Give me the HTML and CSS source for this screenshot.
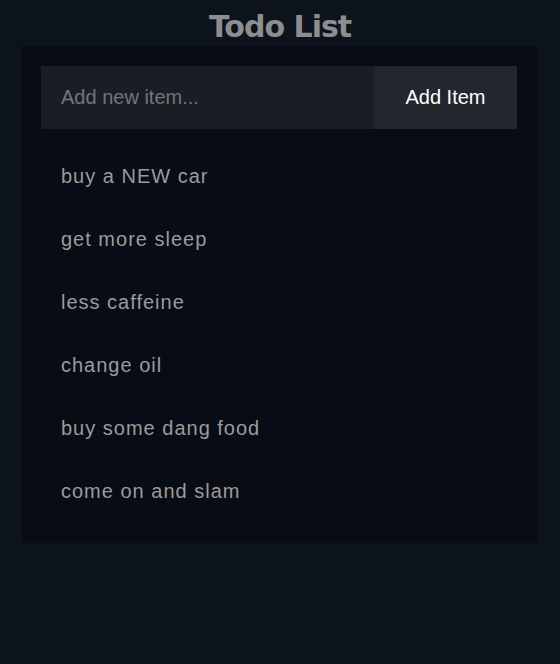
FILE: index.html
```html
<!DOCTYPE html>
<html>
<head>
<meta charset="utf-8">
<link rel="stylesheet" href="styles.css">
</head>
<body>
<h1 class="title">Todo List</h1>
<div class="panel">
  <form class="add-form">
    <input class="add-input" type="text" placeholder="Add new item...">
    <button class="add-btn" type="button">Add Item</button>
  </form>
  <ul class="items">
    <li class="item">buy a NEW car</li>
    <li class="item">get more sleep</li>
    <li class="item">less caffeine</li>
    <li class="item">change oil</li>
    <li class="item">buy some dang food</li>
    <li class="item">come on and slam</li>
  </ul>
</div>
</body>
</html>
```
FILE: styles.css
```css
html, body {
  margin: 0;
  padding: 0;
  background: #0d131d;
  font-family: "Liberation Sans", Arial, sans-serif;
}
body {
  width: 560px;
  height: 664px;
}
.title {
  margin: 0;
  height: 46px;
  line-height: 54px;
  text-align: center;
  font-family: "DejaVu Sans", Verdana, sans-serif;
  font-weight: bold;
  font-size: 30px;
  letter-spacing: -1px;
  color: #8e8e8e;
}
.panel {
  margin: 0 23px 0 21px;
  background: #080c14;
  padding: 20px 20px 20.5px 20px;
}
.add-form {
  display: flex;
  margin: 0;
  height: 63px;
}
.add-input {
  flex: 1;
  min-width: 0;
  border: 0;
  outline: none;
  background: #1a1d23;
  color: #ccc;
  padding: 0 20px;
  font-family: "Liberation Sans", Arial, sans-serif;
  font-size: 20px;
}
.add-input::placeholder {
  color: #72757a;
}
.add-btn {
  width: 143px;
  border: 0;
  background: #22262d;
  color: #ffffff;
  font-family: "Liberation Sans", Arial, sans-serif;
  font-size: 20px;
  padding: 0;
}
.items {
  list-style: none;
  margin: 15.5px 0 0 0;
  padding: 0;
}
.item {
  height: 63px;
  display: flex;
  align-items: center;
  padding-left: 20px;
  font-size: 20px;
  letter-spacing: 1px;
  color: #9b9b9b;
}
```
